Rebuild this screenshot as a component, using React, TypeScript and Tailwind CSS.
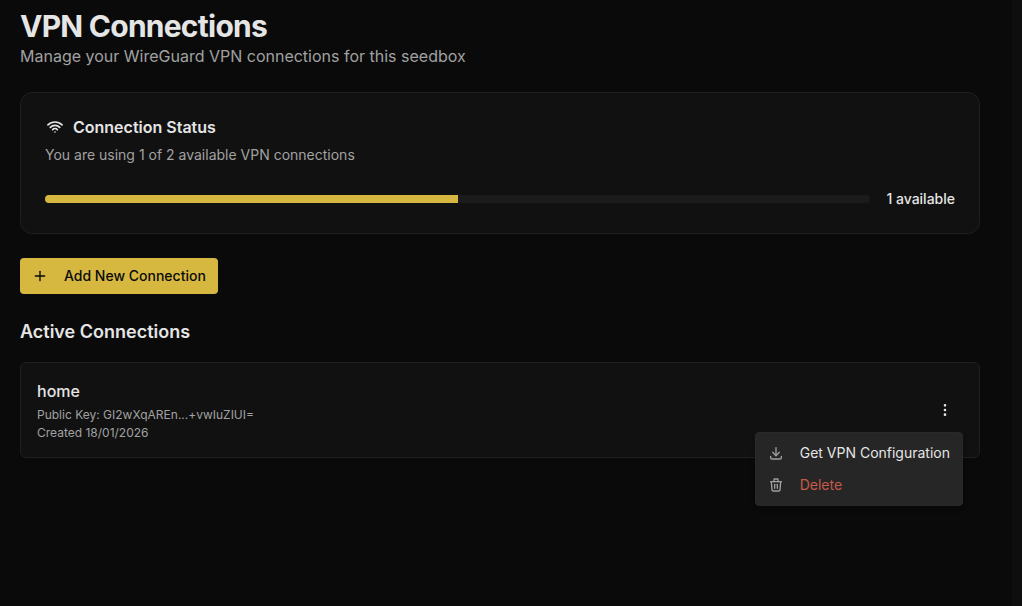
import { FC } from 'react'
import {
    TbDotsVertical,
    TbDownload,
    TbPlus,
    TbTrash,
    TbWifi
} from 'react-icons/tb'

type Connection = {
    id: number
    name: string
    publicKey: string
    createdAt: string
    menuOpen?: boolean
}

const maxConnections = 2

const connections: Connection[] = [
    {
        id: 1,
        name: 'home',
        publicKey: 'GI2wXqAREn...+vwIuZIUI=',
        createdAt: '18/01/2026',
        menuOpen: true
    }
]

const ConnectionStatus: FC = () => {
    const used = connections.length
    const percent = (used / maxConnections) * 100

    return (
        <section className="rounded-xl border border-[#1f1f1f] bg-[#111111] p-6">
            <h2 className="flex items-center gap-2 text-base leading-5 font-semibold">
                <TbWifi size={20} />
                Connection Status
            </h2>
            <p className="mt-2 text-sm text-[#a1a1a1]">
                You are using {used} of {maxConnections} available VPN
                connections
            </p>
            <div className="mt-6 flex items-center gap-4">
                <div
                    role="progressbar"
                    aria-label="VPN connections in use"
                    aria-valuenow={percent}
                    className="h-2 flex-1 overflow-hidden rounded-full bg-[#1b1b1b]"
                >
                    <div
                        className="h-full bg-[#d6b840]"
                        style={{ width: `${percent}%` }}
                    />
                </div>
                <span className="text-sm font-medium">
                    {maxConnections - used} available
                </span>
            </div>
        </section>
    )
}

const ConnectionMenu: FC = () => (
    <div
        role="menu"
        className="absolute top-10 right-0 z-10 rounded border border-[#292929] bg-[#262626] p-1 text-sm whitespace-nowrap shadow-md"
    >
        <button
            type="button"
            role="menuitem"
            className="flex h-8 w-full items-center gap-4 px-2"
        >
            <TbDownload size={16} className="text-[#a1a1a1]" />
            Get VPN Configuration
        </button>
        <button
            type="button"
            role="menuitem"
            className="flex h-8 w-full items-center gap-4 px-2 text-[#c75a48]"
        >
            <TbTrash size={16} className="text-[#a1a1a1]" />
            Delete
        </button>
    </div>
)

const ConnectionCard: FC<{ connection: Connection }> = ({ connection }) => (
    <li className="flex items-center justify-between rounded-md border border-[#1f1f1f] bg-[#111111] p-4">
        <div>
            <h3 className="text-base font-medium">{connection.name}</h3>
            <p className="mt-1 text-xs text-[#a1a1a1]">
                Public Key: {connection.publicKey}
            </p>
            <p className="mt-0.5 text-xs text-[#a1a1a1]">
                Created {connection.createdAt}
            </p>
        </div>
        <div className="relative">
            <button
                type="button"
                aria-label="Connection options"
                className="flex size-9 items-center justify-center"
            >
                <TbDotsVertical size={16} />
            </button>
            {connection.menuOpen ? <ConnectionMenu /> : null}
        </div>
    </li>
)

const App: FC = () => {
    return (
        <div className="flex min-h-screen bg-[#0a0a0a] font-['Inter',sans-serif] text-[#e5e5e5] antialiased">
            <main className="min-w-0 flex-1 pt-2 pr-8 pb-6 pl-5">
                <h1 className="text-3xl font-bold tracking-tight">
                    VPN Connections
                </h1>
                <p className="text-base text-[#a1a1a1]">
                    Manage your WireGuard VPN connections for this seedbox
                </p>
                <div className="mt-6">
                    <ConnectionStatus />
                </div>
                <button
                    type="button"
                    className="mt-6 flex h-9 items-center gap-4 rounded bg-[#d6b840] px-3 text-sm font-medium text-[#0a0a0a]"
                >
                    <TbPlus size={16} />
                    Add New Connection
                </button>
                <h2 className="mt-6 text-lg font-semibold">
                    Active Connections
                </h2>
                <ul className="mt-4">
                    {connections.map((connection) => (
                        <ConnectionCard
                            key={connection.id}
                            connection={connection}
                        />
                    ))}
                </ul>
            </main>
            <div className="w-2.5 bg-[#0e0e0e]" />
        </div>
    )
}

export default App
